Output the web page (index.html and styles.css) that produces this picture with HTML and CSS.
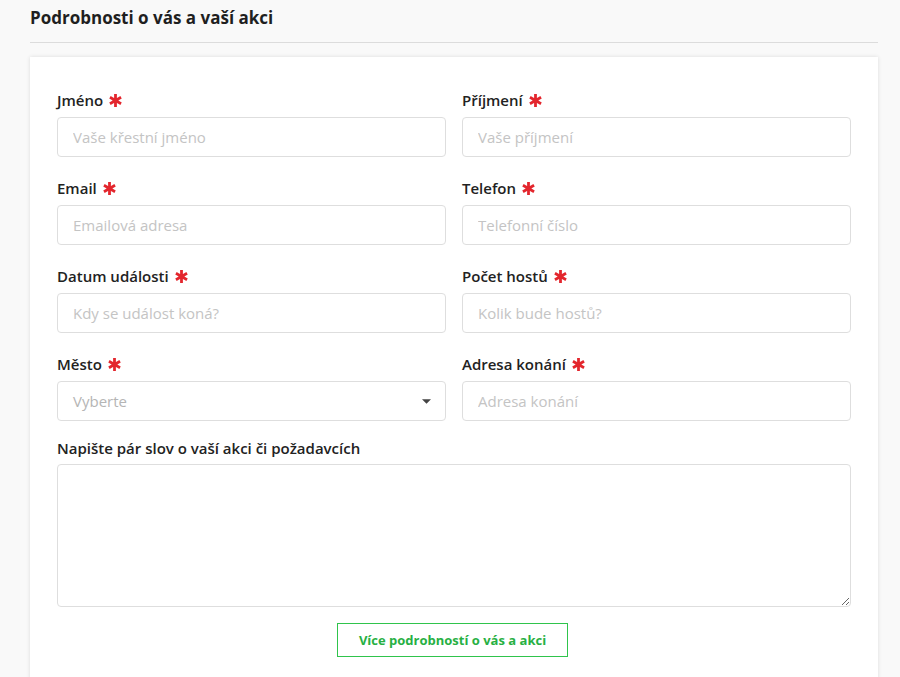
FILE: index.html
```html
<!DOCTYPE html>
<html>

<head>
    <link rel="stylesheet" href="styles.css">
    <title>Podrobnosti o vás a vaší akci</title>
</head>

<body>
    <div class="page">
        <h2 class="section_title">Podrobnosti o vás a vaší akci</h2>

        <form class="card">
            <div class="grid">
                <div class="field">
                    <label class="label">Jméno <svg class="star" viewBox="0 0 14 14"><path d="M7 1v12M1.8 4l10.4 6M1.8 10l10.4-6" /></svg></label>
                    <input class="control" type="text" placeholder="Vaše křestní jméno" />
                </div>
                <div class="field">
                    <label class="label">Příjmení <svg class="star" viewBox="0 0 14 14"><path d="M7 1v12M1.8 4l10.4 6M1.8 10l10.4-6" /></svg></label>
                    <input class="control" type="text" placeholder="Vaše příjmení" />
                </div>
                <div class="field">
                    <label class="label">Email <svg class="star" viewBox="0 0 14 14"><path d="M7 1v12M1.8 4l10.4 6M1.8 10l10.4-6" /></svg></label>
                    <input class="control" type="text" placeholder="Emailová adresa" />
                </div>
                <div class="field">
                    <label class="label">Telefon <svg class="star" viewBox="0 0 14 14"><path d="M7 1v12M1.8 4l10.4 6M1.8 10l10.4-6" /></svg></label>
                    <input class="control" type="text" placeholder="Telefonní číslo" />
                </div>
                <div class="field">
                    <label class="label">Datum události <svg class="star" viewBox="0 0 14 14"><path d="M7 1v12M1.8 4l10.4 6M1.8 10l10.4-6" /></svg></label>
                    <input class="control" type="text" placeholder="Kdy se událost koná?" />
                </div>
                <div class="field">
                    <label class="label">Počet hostů <svg class="star" viewBox="0 0 14 14"><path d="M7 1v12M1.8 4l10.4 6M1.8 10l10.4-6" /></svg></label>
                    <input class="control" type="text" placeholder="Kolik bude hostů?" />
                </div>
                <div class="field">
                    <label class="label">Město <svg class="star" viewBox="0 0 14 14"><path d="M7 1v12M1.8 4l10.4 6M1.8 10l10.4-6" /></svg></label>
                    <div class="control select">
                        <span>Vyberte</span>
                        <svg class="caret" viewBox="0 0 10 5"><path d="M0 0h10L5 5z" /></svg>
                    </div>
                </div>
                <div class="field">
                    <label class="label">Adresa konání <svg class="star" viewBox="0 0 14 14"><path d="M7 1v12M1.8 4l10.4 6M1.8 10l10.4-6" /></svg></label>
                    <input class="control" type="text" placeholder="Adresa konání" />
                </div>
                <div class="field wide">
                    <label class="label">Napište pár slov o vaší akci či požadavcích</label>
                    <textarea class="control area"></textarea>
                </div>
            </div>

            <div class="actions">
                <button type="button" class="more_button">Více podrobností o vás a akci</button>
            </div>
        </form>
    </div>
</body>

</html>
```

FILE: styles.css
```css
body {
    margin: 0;
    background: #f9f9f9;
    font-family: "Open Sans", "Noto Sans", sans-serif;
    color: #222;
}

.page {
    padding: 0 22px 0 30px;
    overflow: hidden;
    height: 677px;
}

.section_title {
    margin: 0;
    padding: 6px 0 13px 0;
    font-size: 17px;
    font-weight: 700;
    line-height: 23px;
    color: #1f1f1f;
    border-bottom: 1px solid #dcdcdc;
}

.card {
    margin-top: 14px;
    background: #ffffff;
    box-shadow: 0 0 4px rgba(0, 0, 0, 0.12);
    padding: 33px 27px 40px 27px;
}

.grid {
    display: grid;
    grid-template-columns: 1fr 1fr;
    column-gap: 16px;
    row-gap: 21px;
}

.field {
    display: flex;
    flex-direction: column;
}

.wide {
    grid-column: 1 / 3;
    margin-top: -4px;
}

.label {
    display: flex;
    align-items: center;
    gap: 5px;
    font-size: 15px;
    font-weight: 600;
    line-height: 20px;
    color: #222;
    margin-bottom: 7px;
}

.star {
    width: 15px;
    height: 15px;
    fill: none;
    stroke: #e3262d;
    stroke-width: 2.6;
}

.control {
    box-sizing: border-box;
    height: 40px;
    border: 1px solid #dedede;
    border-radius: 4px;
    padding: 0 15px;
    font-family: "Open Sans", "Noto Sans", sans-serif;
    font-size: 15px;
    color: #333;
    background: #fff;
    width: 100%;
}

.control::placeholder {
    color: #c4c4c4;
}

.select {
    display: flex;
    align-items: center;
    justify-content: space-between;
    color: #b5b5b5;
    padding-right: 14px;
}

.caret {
    width: 9px;
    height: 5px;
    fill: #444;
}

.area {
    height: 143px;
    resize: vertical;
    display: block;
}

.wide .label {
    margin-bottom: 6px;
}

.actions {
    display: flex;
    justify-content: center;
    margin-top: 16px;
    padding-right: 3px;
}

.more_button {
    appearance: none;
    width: 231px;
    height: 34px;
    border: 1px solid #2fc44c;
    border-radius: 0;
    background: #fff;
    color: #27b043;
    font-family: "Open Sans", "Noto Sans", sans-serif;
    font-size: 13px;
    font-weight: 700;
}
```
